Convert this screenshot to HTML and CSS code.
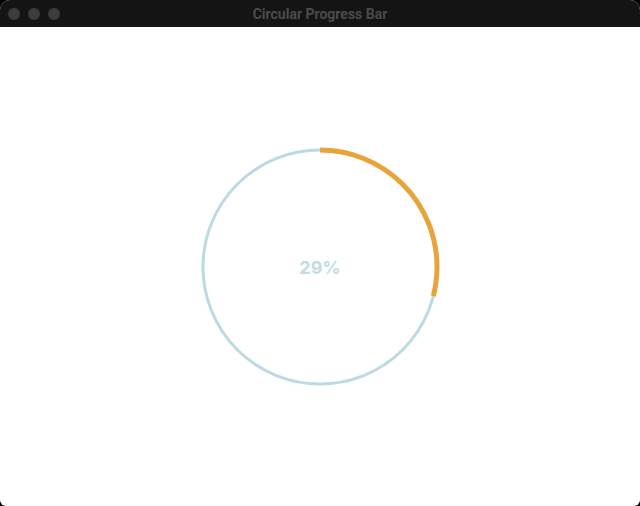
FILE: index.html
```html
<!DOCTYPE html>
<html>
<head>
<meta charset="utf-8">
<link rel="stylesheet" href="styles.css">
</head>
<body>
<div class="window">
  <div class="titlebar">
    <div class="lights"><span class="light"></span><span class="light"></span><span class="light"></span></div>
    <div class="title">Circular Progress Bar</div>
  </div>
  <div class="content">
    <div class="progress">
      <svg class="ring" width="240" height="240" viewBox="0 0 240 240">
        <circle class="track" cx="120" cy="120" r="117"></circle>
        <circle class="bar" cx="120" cy="120" r="117" stroke-dasharray="213.19 1000" transform="rotate(-90 120 120)"></circle>
      </svg>
      <div class="label">29%</div>
    </div>
  </div>
</div>
</body>
</html>
```
FILE: styles.css
```css
html, body {
  margin: 0;
  padding: 0;
  background: #000;
  width: 640px;
  height: 506px;
  overflow: hidden;
}
.window {
  width: 640px;
  height: 506px;
  display: flex;
  flex-direction: column;
  background: #ffffff;
  border-radius: 10px 10px 6px 6px;
  overflow: hidden;
  font-family: Roboto, "Liberation Sans", sans-serif;
}
.titlebar {
  height: 27px;
  background: #141414;
  display: flex;
  align-items: center;
  position: relative;
  flex: none;
}
.lights {
  display: flex;
  gap: 8px;
  padding-left: 8px;
}
.light {
  width: 12px;
  height: 12px;
  border-radius: 50%;
  background: #3c3c3c;
}
.title {
  position: absolute;
  left: 0;
  right: 0;
  top: 0;
  bottom: 0;
  display: flex;
  align-items: center;
  justify-content: center;
  color: #4b4b4b;
  font-size: 14px;
  font-weight: 700;
}
.content {
  flex: 1;
  display: flex;
  align-items: center;
  justify-content: center;
  padding-top: 1px;
}
.progress {
  position: relative;
  width: 240px;
  height: 240px;
}
.ring {
  display: block;
}
.track {
  fill: none;
  stroke: #bcdae3;
  stroke-width: 3;
}
.bar {
  fill: none;
  stroke: #e8a43a;
  stroke-width: 5;
}
.label {
  position: absolute;
  inset: 0;
  display: flex;
  align-items: center;
  justify-content: center;
  color: #c0dce5;
  font-family: Inter, Roboto, sans-serif;
  font-size: 18px;
  font-weight: 700;
  padding-top: 1px;
}
```
